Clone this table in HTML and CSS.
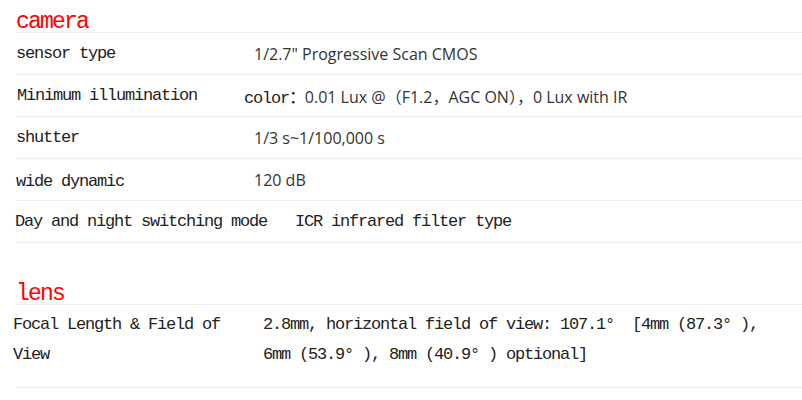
FILE: index.html
```html
<!DOCTYPE html>
<html lang="en">
<head>
    <meta charset="UTF-8">
    <meta name="viewport" content="width=device-width, initial-scale=1.0">
    <title>Camera Specifications</title>
    <link rel="stylesheet" href="styles.css">
</head>
<body>
    <div class="spec-page">
        <div class="spec-section">
            <div class="section-title">camera</div>
            <div class="spec-row">
                <div class="spec-label">sensor type</div>
                <div class="spec-value">1/2.7" Progressive Scan CMOS</div>
            </div>
            <div class="spec-row">
                <div class="spec-label spec-label-narrow">Minimum illumination</div>
                <div class="spec-value"><span class="mono">color：</span>0.01 Lux @（F1.2，AGC ON），0 Lux with IR</div>
            </div>
            <div class="spec-row">
                <div class="spec-label">shutter</div>
                <div class="spec-value">1/3 s~1/100,000 s</div>
            </div>
            <div class="spec-row">
                <div class="spec-label spec-label-low">wide dynamic</div>
                <div class="spec-value">120 dB</div>
            </div>
            <div class="spec-row">
                <div class="spec-label spec-label-wide">Day and night switching mode</div>
                <div class="spec-value mono">ICR infrared filter type</div>
            </div>
        </div>

        <div class="spec-section lens-section">
            <div class="section-title">lens</div>
            <div class="spec-row spec-row-tall">
                <div class="spec-label spec-label-lens">Focal Length &amp; Field of View</div>
                <div class="spec-value spec-value-lens mono">2.8mm, horizontal field of view: 107.1°&nbsp; [4mm (87.3° ), 6mm (53.9° ), 8mm (40.9° ) optional]</div>
            </div>
        </div>
    </div>
</body>
</html>
```

FILE: styles.css
```css
* {
    margin: 0;
    padding: 0;
    box-sizing: border-box;
}

body {
    background: #fff;
    color: #333;
}

.spec-page {
    padding-left: 16px;
}

.section-title {
    height: 33px;
    padding-top: 12px;
    line-height: 20px;
    border-bottom: 1px solid #eee;
    color: #f00;
    font-family: 'Liberation Mono', monospace;
    font-size: 23px;
    letter-spacing: -1.8px;
}

.lens-section {
    margin-top: 29px;
}

.spec-row {
    display: flex;
    align-items: center;
    height: 42px;
    border-bottom: 1px solid #eee;
}

.spec-label {
    flex: none;
    width: 238px;
    font-family: 'Liberation Mono', monospace;
    font-size: 17px;
    letter-spacing: -1.2px;
    color: #222;
}

.spec-label-narrow {
    width: 227px;
    margin-left: 1px;
}

.spec-label-low {
    padding-top: 4px;
}

.spec-label-wide {
    width: 280px;
    margin-left: -1px;
}

.spec-value {
    font-family: 'Open Sans', 'Noto Sans CJK SC', sans-serif;
    font-size: 16px;
    color: #333;
}

/* SimSun-like text inside values */
.spec-value.mono,
.spec-value .mono {
    font-family: 'Liberation Mono', 'Noto Sans CJK SC', monospace;
    font-size: 17px;
    letter-spacing: -1.2px;
    color: #222;
}

/* two-line lens row */
.spec-row-tall {
    height: 83px;
    align-items: flex-start;
    padding: 5px 0 17px;
}

.spec-label-lens {
    width: 250px;
    margin-left: -3px;
    line-height: 30px;
}

.spec-value-lens {
    width: 510px;
    line-height: 30px;
}
```
